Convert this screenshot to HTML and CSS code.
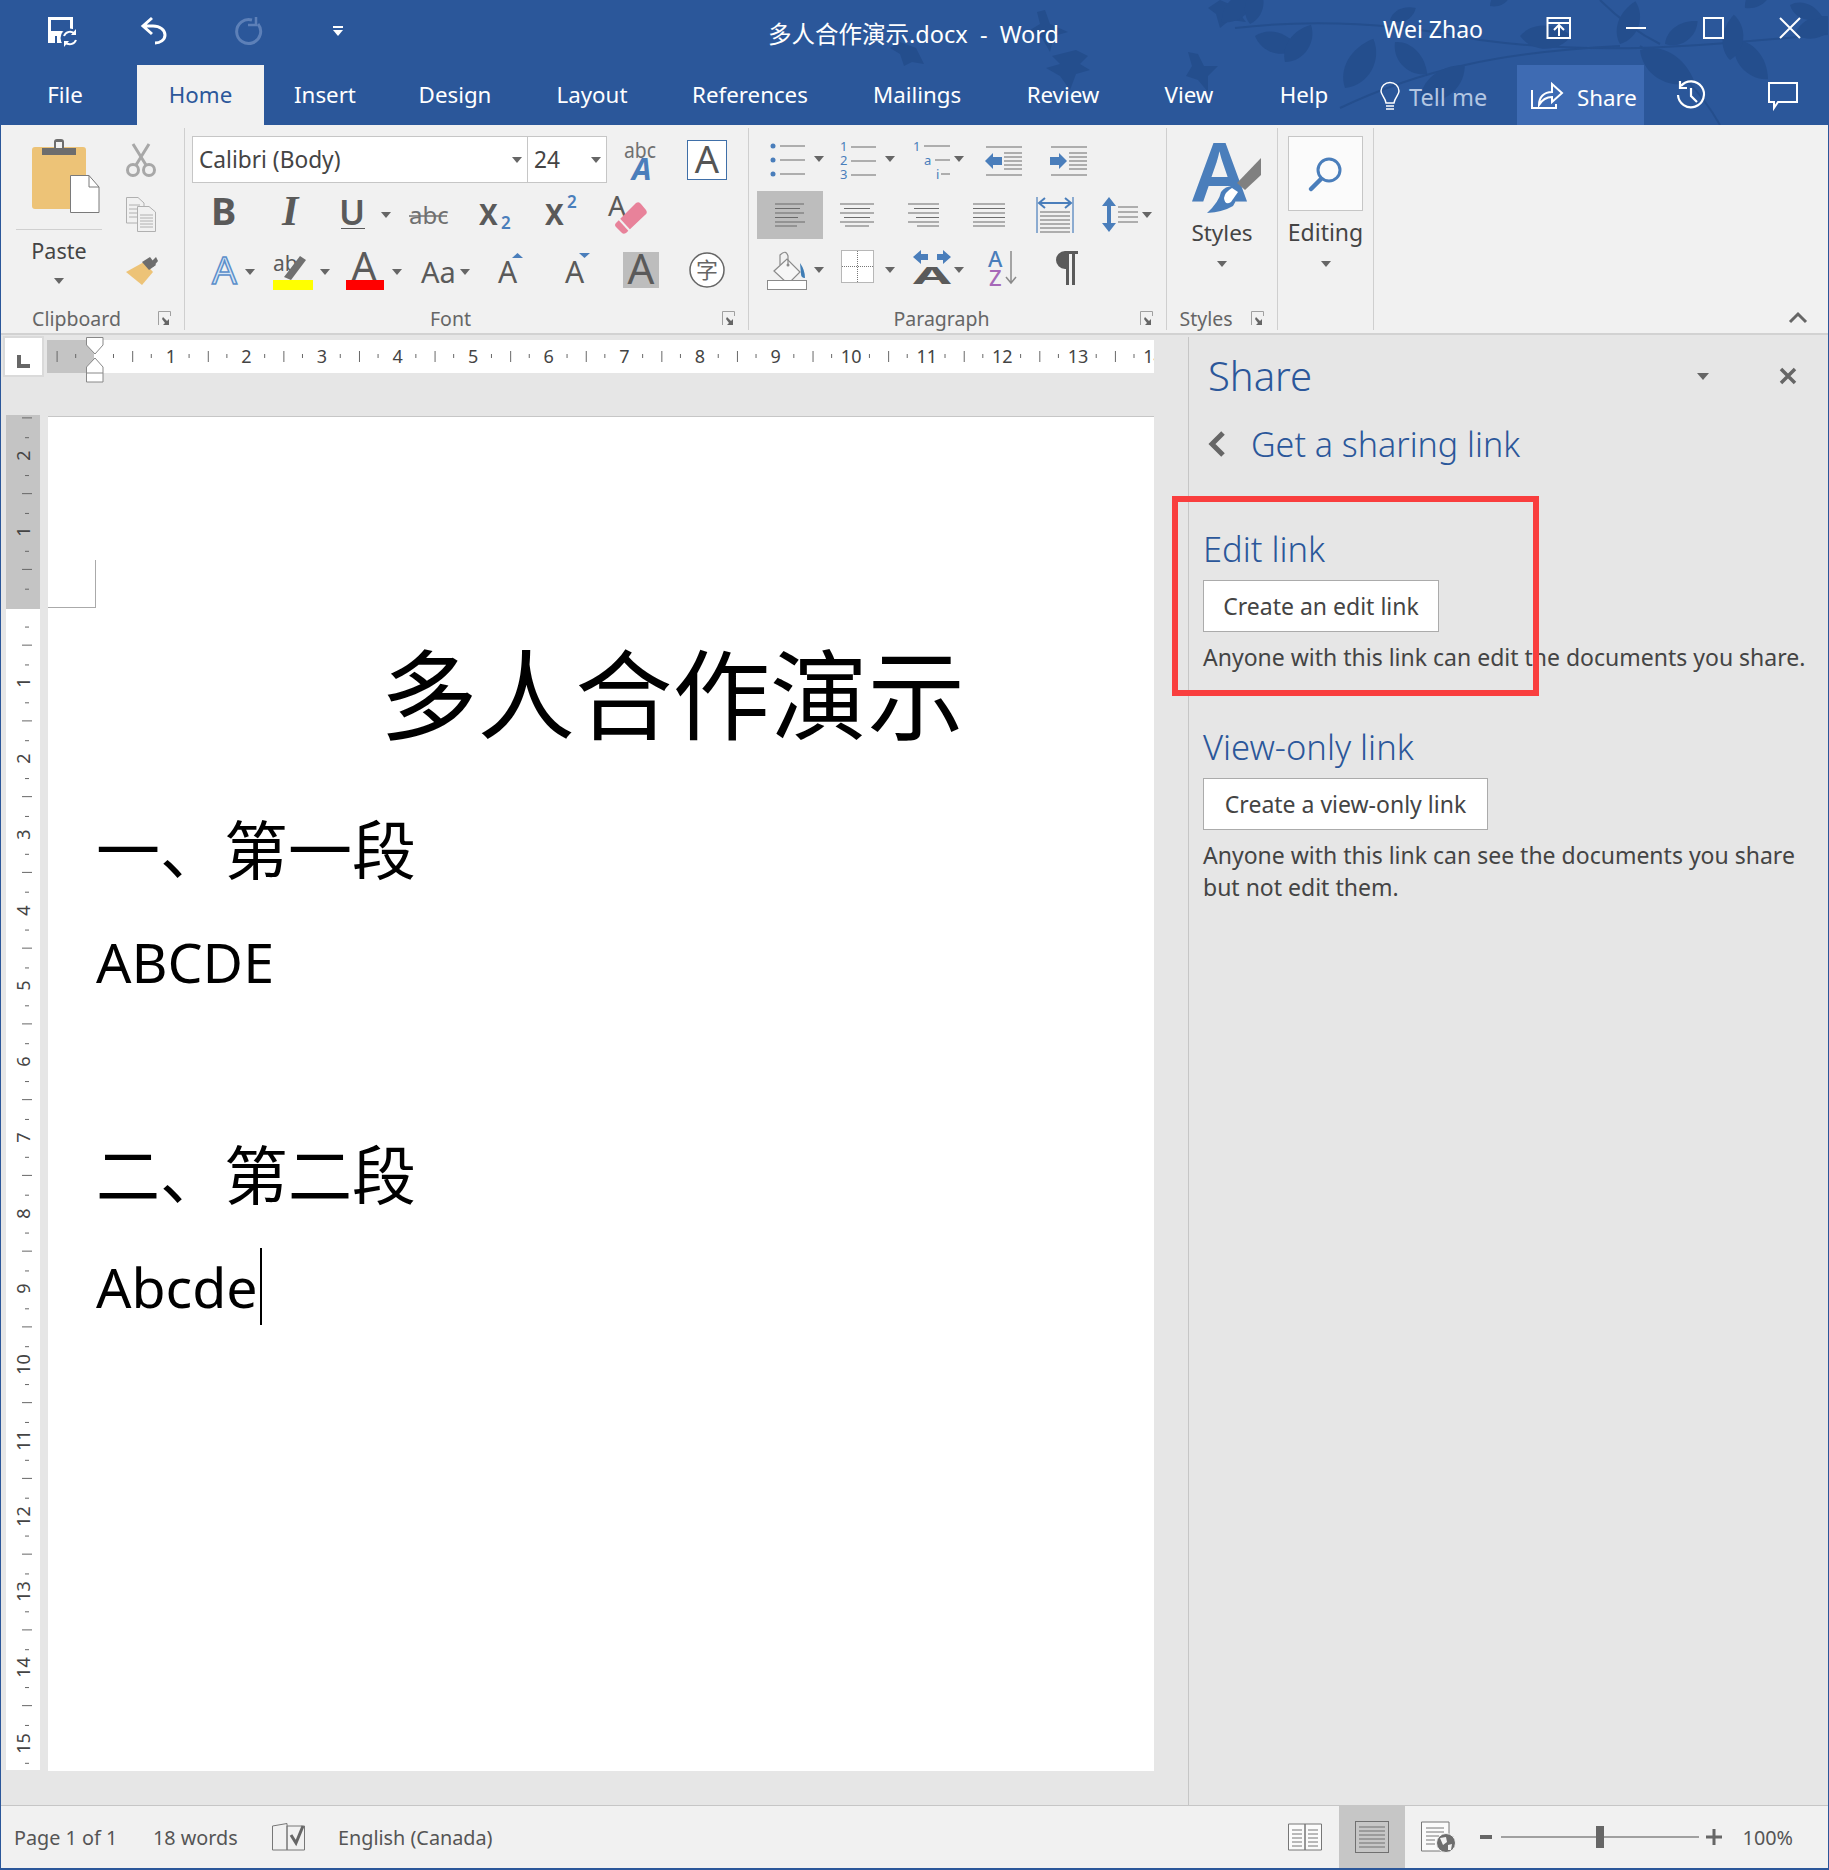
FILE: index.html
```html
<!DOCTYPE html>
<html lang="en">
<head>
    <meta charset="UTF-8">
    <title>多人合作演示.docx - Word</title>
    <link rel="stylesheet" href="styles.css">
</head>
<body>
<div class="window">

    <!-- Title bar and tabs -->
    <header class="header">
        <svg class="deco" width="1829" height="125" viewBox="0 0 1829 125" fill="#244e8d">
            <defs><path id="leaf" d="M0 0C10-17 34-22 56-10 46 10 18 17 0 0Z"/></defs>
            <g fill="none" stroke="#244e8d" stroke-width="2">
                <path d="M1235 28C1320 18 1400 24 1480 40 1600 56 1700 46 1829 34"/>
                <path d="M1340 108C1420 70 1500 52 1620 46"/>
                <path d="M1640 46C1680 70 1700 90 1720 125"/>
                <path d="M1600 0C1620 20 1640 34 1660 44"/>
            </g>
            <path d="M1037 12l8-2 5 14 18 8-14 4-4 16-8-14-12-8 10-6z"/>
            <path d="M1052 56l24-6 12 6-8 8 10 6-14 4-6 16-10-14-14-8 14-4z"/>
            <path d="M900 42l16 6 8 16-12-2-8 4-4-12-10-6z"/>
            <path d="M1188 52l10 2 6 12 14 0-10 10 0 16-10-12-12-4 6-10z"/>
            <path d="M1220 0l14 6 12 16-16-2-10 8-4-14-8-6z"/>
            <use href="#leaf" transform="translate(1222 22) rotate(-35) scale(.8)"/>
            <use href="#leaf" transform="translate(1250 24) rotate(-70) scale(.7)"/>
            <use href="#leaf" transform="translate(1255 36) rotate(25) scale(.8)"/>
            <use href="#leaf" transform="translate(1285 62) rotate(-45) scale(.8)"/>
            <use href="#leaf" transform="translate(1345 88) rotate(-50) scale(1)"/>
            <use href="#leaf" transform="translate(1395 42) rotate(55) scale(.8)"/>
            <use href="#leaf" transform="translate(1420 100) rotate(-28) scale(1)"/>
            <use href="#leaf" transform="translate(1390 20) rotate(-15) scale(.5)"/>
            <use href="#leaf" transform="translate(1490 6) rotate(-30) scale(.5)"/>
            <use href="#leaf" transform="translate(1520 36) rotate(10) scale(.9)"/>
            <use href="#leaf" transform="translate(1620 44) rotate(-60) scale(.8)"/>
            <use href="#leaf" transform="translate(1640 50) rotate(40) scale(1.1)"/>
            <use href="#leaf" transform="translate(1665 44) rotate(-25) scale(.7)"/>
            <use href="#leaf" transform="translate(1735 40) rotate(60) scale(.9)"/>
            <use href="#leaf" transform="translate(1730 60) rotate(-75) scale(.8)"/>
            <use href="#leaf" transform="translate(1745 8) rotate(-35) scale(.7)"/>
            <use href="#leaf" transform="translate(1795 34) rotate(-10) scale(.8)"/>
            <use href="#leaf" transform="translate(1790 5) rotate(30) scale(.6)"/>
        </svg>
        <div class="title-bar">
            <div class="qat">
                <svg width="34" height="32" viewBox="0 0 34 32">
                    <path d="M2 2H27V19H18V28H2Z" fill="#fff"/>
                    <rect x="5" y="5" width="19" height="11" fill="#2B579A"/>
                    <rect x="9" y="21" width="2" height="7" fill="#2B579A"/>
                    <circle cx="24" cy="23" r="9.500" fill="#2B579A"/>
                    <path d="M18 21a6.500 6.500 0 0 1 11-2M30 25a6.500 6.500 0 0 1-11 2" fill="none" stroke="#fff" stroke-width="2"/>
                    <path d="M30 14v6h-5ZM18 32v-6h5Z" fill="#fff"/>
                </svg>
                <svg width="28" height="30" viewBox="0 0 28 30" fill="none" stroke="#fff" stroke-width="3">
                    <path d="M12 2 3 10l9 8M3 10H13C20 10 25 14 25 19 25 24 20 27 15 27"/>
                </svg>
                <svg width="30" height="30" viewBox="0 0 30 30" fill="none" stroke="#5d80b8" stroke-width="3">
                    <path d="M19 4A12 12 0 1 0 25 8"/>
                    <path d="M23 1v8h-8" stroke-width="2.500"/>
                </svg>
                <svg width="10" height="10" viewBox="0 0 10 10" fill="#fff">
                    <rect width="10" height="2"/><path d="M0 4h10l-5 6Z"/>
                </svg>
            </div>
            <div class="doc-name">多人合作演示.docx&nbsp; -&nbsp; Word</div>
            <div class="user">Wei Zhao</div>
            <svg class="win-btn" width="26" height="22" viewBox="0 0 26 22" fill="none" stroke="#fff" stroke-width="2">
                <path d="M1.500 1H24V21H1.500ZM1.500 6H24M13 19V9M8 13l5-5 5 5"/>
            </svg>
            <svg class="win-btn" width="22" height="22" viewBox="0 0 22 22" stroke="#fff" stroke-width="2"><path d="M1 11H21"/></svg>
            <svg class="win-btn" width="22" height="22" viewBox="0 0 22 22" fill="none" stroke="#fff" stroke-width="2"><rect x="2" y="1" width="19" height="20"/></svg>
            <svg class="win-btn" width="22" height="22" viewBox="0 0 22 22" stroke="#fff" stroke-width="2"><path d="M1 1 21 21M21 1 1 21"/></svg>
        </div>
        <nav class="tabs">
            <div class="tab tab-file">File</div>
            <div class="tab tab-active">Home</div>
            <div class="tab">Insert</div>
            <div class="tab">Design</div>
            <div class="tab">Layout</div>
            <div class="tab">References</div>
            <div class="tab">Mailings</div>
            <div class="tab">Review</div>
            <div class="tab">View</div>
            <div class="tab">Help</div>
            <div class="tell">
                <svg width="22" height="30" viewBox="0 0 22 30" fill="none" stroke="#fff" stroke-width="1.500">
                    <path d="M7 21C6 15 2 13 2 9A9 8.500 0 0 1 20 9C20 13 16 15 15 21ZM7 24H15M7 27H15" />
                </svg>
                <span>Tell me</span>
            </div>
            <div class="tab-share">
                <svg width="34" height="28" viewBox="0 0 34 28" fill="none" stroke="#fff" stroke-width="2">
                    <path d="M2 9V27H26V23"/>
                    <path d="M9 24C9 16 14 11 22 11V3L32 12 22 21V16C16 16 12 19 9 24Z"/>
                </svg>
                <span>Share</span>
            </div>
            <svg class="history" width="32" height="30" viewBox="0 0 32 30" fill="none" stroke="#fff" stroke-width="2.200">
                <path d="M6 6A13 13 0 1 1 3 15M5 1V8H12M16 8V16L22 22"/>
            </svg>
            <svg class="comment" width="32" height="28" viewBox="0 0 32 28" fill="none" stroke="#fff" stroke-width="2">
                <path d="M2 2H30V21H11L7 27V21H2Z"/>
            </svg>
        </nav>
    </header>

    <!-- Ribbon -->
    <section class="ribbon">

        <div class="group group-clipboard">
            <div class="group-body clip-body">
                <div class="paste">
                    <svg class="paste-icon" width="72" height="78" viewBox="0 0 72 78">
                        <rect x="2" y="10" width="54" height="62" rx="3" fill="#edc377"/>
                        <path d="M12 18V11H24V5Q24 2 27 2H31Q34 2 34 5V11H46V18Z" fill="#6d6d6d"/>
                        <rect x="26" y="5" width="6" height="6" fill="#f1f1f1"/>
                        <path d="M40.500 38.500H59L69 50V75.500H40.500Z" fill="#fff" stroke="#7a7a7a"/>
                        <path d="M59 38.500V50H69" fill="none" stroke="#7a7a7a"/>
                    </svg>
                    <div class="paste-label">Paste</div>
                    <i class="caret"></i>
                </div>
                <div class="clip-tools">
                    <svg width="30" height="34" viewBox="0 0 30 34" fill="none" stroke="#a8a8a8" stroke-width="3">
                        <circle cx="7" cy="27" r="5.500"/><circle cx="23" cy="27" r="5.500"/>
                        <path d="M10 22 23 1M20 22 7 1"/>
                    </svg>
                    <svg width="30" height="35" viewBox="0 0 30 35" fill="#f1f1f1" stroke="#b0b0b0">
                        <path d="M.5.500H12L18 6V26H.5Z"/>
                        <path d="M3 8H14M3 12H14M3 16H14M3 20H14" fill="none"/>
                        <path d="M11.500 9.500H23L29.500 15V34.500H11.500Z"/>
                        <path d="M14 18H27M14 21H27M14 24H27M14 27H27M14 30H27" fill="none"/>
                    </svg>
                    <svg width="32" height="28" viewBox="0 0 32 28">
                        <path d="M0 15 18 5 27 15 16 28Z" fill="#edc377"/>
                        <path d="M15 6 23 1 29 9 22 14Z" fill="#6d6d6d" transform="translate(1 -1)"/>
                        <path d="M24 6 30 0 32 4 27 10Z" fill="#6d6d6d"/>
                    </svg>
                </div>
            </div>
            <div class="group-label"><span>Clipboard</span><svg class="launcher" width="13" height="15" viewBox="0 0 13 15"><path d="M.5 14V.5H12.500V5" fill="none" stroke="#a0a0a0"/><path d="M5 6 9 10 11 8V14H5L7 12 4 8Z" fill="#666"/></svg></div>
        </div>

        <div class="group group-font">
            <div class="group-body font-body">
                <div class="font-row">
                    <div class="font-box"><span>Calibri (Body)</span><i class="caret"></i></div>
                    <div class="size-box"><span>24</span><i class="caret"></i></div>
                    <svg class="abc-icon" width="34" height="40" viewBox="0 0 34 40">
                        <text x="0" y="18" font-size="21" textLength="32" lengthAdjust="spacingAndGlyphs" fill="#707070">abc</text>
                        <text x="8" y="40" font-size="31" font-weight="700" font-style="italic" fill="#4a7ebb">A</text>
                    </svg>
                    <svg class="box-a" width="40" height="40" viewBox="0 0 40 40">
                        <rect x=".5" y=".5" width="39" height="39" fill="#fff" stroke="#3f6fa8"/>
                        <text x="20" y="33" font-size="38" text-anchor="middle" fill="#555">A</text>
                    </svg>
                </div>
                <div class="tool-row font-row-2">
                    <svg width="40" height="40" viewBox="0 0 40 40"><text x="-2" y="30" font-size="38" font-weight="700" fill="#5a5a5a">B</text></svg>
                    <svg width="40" height="40" viewBox="0 0 40 40"><text x="0" y="30" font-size="42" font-weight="700" font-style="italic" class="serif" fill="#5a5a5a">I</text></svg>
                    <svg width="30" height="40" viewBox="0 0 30 40"><text x="-2" y="30" font-size="35" font-weight="600" fill="#5a5a5a">U</text><path d="M0 33.500H24" stroke="#5a5a5a"/></svg>
                    <i class="caret"></i>
                    <svg width="42" height="40" viewBox="0 0 42 40"><text x="0" y="29" font-size="24" fill="#707070">abc</text><path d="M0 21H38" stroke="#707070" stroke-width="1.500"/></svg>
                    <svg width="34" height="40" viewBox="0 0 34 40"><text x="0" y="30" font-size="28" font-weight="700" fill="#5a5a5a">X</text><text x="22" y="34" font-size="17" font-weight="600" fill="#4a7ebb">2</text></svg>
                    <svg width="34" height="40" viewBox="0 0 34 40"><text x="0" y="30" font-size="28" font-weight="700" fill="#5a5a5a">X</text><text x="22" y="13" font-size="17" font-weight="600" fill="#4a7ebb">2</text></svg>
                    <svg width="40" height="40" viewBox="0 0 40 40">
                        <text x="0" y="21" font-size="28" fill="#5a5a5a">A</text>
                        <path d="M8 28 28 8Q31 6 33 9L38 15Q40 18 37 20L18 38Q15 40 13 37L8 32Q6 30 8 28Z" fill="#e8829a"/>
                        <path d="M11 24 22 36" stroke="#f1f1f1" stroke-width="2"/>
                    </svg>
                </div>
                <div class="tool-row font-row-3">
                    <svg width="28" height="36" viewBox="0 0 28 36"><text x="-1" y="32" font-size="39" fill="#d8e6f5" stroke="#5b8fca" stroke-width="1.500">A</text></svg>
                    <i class="caret"></i>
                    <svg width="42" height="40" viewBox="0 0 42 40">
                        <text x="0" y="19" font-size="21" fill="#5a5a5a">ab</text>
                        <path d="M11 25 27 4 33 8 18 28ZM9 28 16 30 12 33Z" fill="#707070"/>
                        <rect y="28" width="40" height="10" fill="#ffff00"/>
                    </svg>
                    <i class="caret"></i>
                    <svg width="40" height="40" viewBox="0 0 40 40">
                        <text x="16" y="29" font-size="40" text-anchor="middle" fill="#5a5a5a">A</text>
                        <rect x="-2" y="28" width="38" height="10" fill="#f00"/>
                    </svg>
                    <i class="caret"></i>
                    <svg width="38" height="40" viewBox="0 0 38 40"><text x="0" y="31" font-size="29" fill="#5a5a5a">Aa</text></svg>
                    <i class="caret"></i>
                    <svg width="30" height="40" viewBox="0 0 30 40"><text x="0" y="31" font-size="30" fill="#5a5a5a">A</text><path d="M14 6 19.500 1 25 6Z" fill="#4a7ebb"/></svg>
                    <svg width="30" height="40" viewBox="0 0 30 40"><text x="0" y="31" font-size="30" fill="#5a5a5a">A</text><path d="M14 1H25L19.500 6Z" fill="#4a7ebb"/></svg>
                    <svg width="36" height="36" viewBox="0 0 36 36"><rect width="36" height="36" fill="#bdbdbd"/><text x="18" y="32" font-size="42" text-anchor="middle" fill="#5a5a5a">A</text></svg>
                    <svg width="36" height="36" viewBox="0 0 36 36"><circle cx="18" cy="18" r="17" fill="#fff" stroke="#666" stroke-width="1.500"/><text x="18" y="26" font-size="22" text-anchor="middle" class="cjk" fill="#666">字</text></svg>
                </div>
            </div>
            <div class="group-label"><span>Font</span><svg class="launcher" width="13" height="15" viewBox="0 0 13 15"><path d="M.5 14V.5H12.500V5" fill="none" stroke="#a0a0a0"/><path d="M5 6 9 10 11 8V14H5L7 12 4 8Z" fill="#666"/></svg></div>
        </div>

        <div class="group group-para">
            <div class="group-body para-body">
                <div class="tool-row para-row-1">
                    <svg class="list-icon" width="36" height="40" viewBox="0 0 36 40">
                        <g fill="#4a7ebb"><circle cx="3" cy="5" r="2.500"/><circle cx="3" cy="19" r="2.500"/><circle cx="3" cy="33" r="2.500"/></g>
                        <path d="M10 5H35M10 19H35M10 33H35" stroke="#6d6d6d" stroke-width="1.200"/>
                    </svg>
                    <i class="caret"></i>
                    <svg class="list-icon" width="38" height="40" viewBox="0 0 38 40">
                        <g font-size="13" fill="#4a7ebb"><text x="0" y="10">1</text><text x="0" y="24">2</text><text x="0" y="38">3</text></g>
                        <path d="M11 6H36M11 20H36M11 34H36" stroke="#6d6d6d" stroke-width="1.200"/>
                    </svg>
                    <i class="caret"></i>
                    <svg class="list-icon" width="38" height="40" viewBox="0 0 38 40">
                        <g font-size="13" fill="#4a7ebb"><text x="0" y="10">1</text><text x="11" y="24">a</text><text x="23" y="38">i</text></g>
                        <path d="M11 5H37M22 19H37M28 33H37" stroke="#6d6d6d" stroke-width="1.200"/>
                    </svg>
                    <i class="caret"></i>
                    <svg class="indent-icon" width="38" height="30" viewBox="0 0 38 30">
                        <path d="M1 1H37M19 7H37M19 11H37M19 15H37M19 19H37M19 23H37M1 29H37" stroke="#6d6d6d" stroke-width="1.200"/>
                        <path d="M0 15 8 7V11H17V19H8V23Z" fill="#4a7ebb"/>
                    </svg>
                    <svg class="indent-icon" width="38" height="30" viewBox="0 0 38 30">
                        <path d="M1 1H37M19 7H37M19 11H37M19 15H37M19 19H37M19 23H37M1 29H37" stroke="#6d6d6d" stroke-width="1.200"/>
                        <path d="M17 15 9 7V11H0V19H9V23Z" fill="#4a7ebb"/>
                    </svg>
                </div>
                <div class="tool-row para-row-2">
                    <div class="align-on">
                        <svg width="32" height="24" viewBox="0 0 32 24"><path d="M1 1H30M1 5.500H26M1 10H30M1 14.500H24M1 19H31M1 23H23" stroke="#6a6a6a" stroke-width="1.200"/></svg>
                    </div>
                    <svg width="36" height="48" viewBox="0 0 36 48"><path d="M1 13H35M5 17.500H31M1 22H35M5 26.500H31M1 31H35M6 35H30" stroke="#6d6d6d" stroke-width="1.200"/></svg>
                    <svg width="34" height="48" viewBox="0 0 34 48"><path d="M2 13H33M8 17.500H33M2 22H33M10 26.500H33M2 31H33M11 35H33" stroke="#6d6d6d" stroke-width="1.200"/></svg>
                    <svg width="34" height="48" viewBox="0 0 34 48"><path d="M1 13H33M1 17.500H33M1 22H33M1 26.500H33M1 31H33M1 35H33" stroke="#6d6d6d" stroke-width="1.200"/></svg>
                    <svg width="38" height="48" viewBox="0 0 38 48">
                        <path d="M1 6V42M37 6V42" stroke="#4a7ebb" stroke-width="1.200"/>
                        <path d="M4 21H34M4 25H34M4 29H34M4 33H34M4 37H34M4 41H34" stroke="#6d6d6d" stroke-width="1.200"/>
                        <path d="M4 12H34M9 7 3 12 9 17M29 7 35 12 29 17" fill="none" stroke="#4a7ebb" stroke-width="2"/>
                    </svg>
                    <svg width="38" height="48" viewBox="0 0 38 48">
                        <path d="M7 10V37" stroke="#4a7ebb" stroke-width="4"/>
                        <path d="M0 15 7 6 14 15ZM0 32 7 41 14 32Z" fill="#4a7ebb"/>
                        <path d="M16 16H36M16 21H36M16 26H36M16 31H36" stroke="#6d6d6d" stroke-width="1.200"/>
                    </svg>
                    <i class="caret"></i>
                </div>
                <div class="tool-row para-row-3">
                    <svg width="42" height="40" viewBox="0 0 42 40">
                        <path d="M7 21 20 9 33 22 21 34Z" fill="#f6f6f6" stroke="#8a8a8a" stroke-width="1.200"/>
                        <path d="M13 15V5Q19-1 21 6V14" fill="none" stroke="#8a8a8a" stroke-width="1.200"/>
                        <circle cx="21" cy="15" r="1.500" fill="#8a8a8a"/>
                        <path d="M33 13Q38 20 38 28 34 28 34 24Z" fill="#3f7db5"/>
                        <rect x=".5" y="30.500" width="39" height="9" fill="#fff" stroke="#8a8a8a"/>
                    </svg>
                    <i class="caret"></i>
                    <svg width="34" height="34" viewBox="0 0 34 34">
                        <rect x=".5" y=".5" width="32" height="32" fill="#fff" stroke="#777" stroke-dasharray="1 1"/>
                        <path d="M16.500 1V33M1 16.500H33" stroke="#777" stroke-dasharray="1 1"/>
                    </svg>
                    <i class="caret"></i>
                    <svg width="38" height="36" viewBox="0 0 38 36">
                        <path d="M0 7 8 0V4H15V10H8V14ZM38 7 30 0V4H24V10H30V14Z" fill="#4a7ebb"/>
                        <text x="0" y="34" font-size="24" font-weight="700" textLength="38" lengthAdjust="spacingAndGlyphs" fill="#5a5a5a">A</text>
                    </svg>
                    <i class="caret"></i>
                    <svg width="30" height="36" viewBox="0 0 30 36">
                        <text x="0" y="17" font-size="22" fill="#4a7ebb" font-weight="500">A</text>
                        <text x="1" y="36" font-size="22" fill="#a668b8" font-weight="500">Z</text>
                        <path d="M23 1V32M18 27 23 33 28 27" fill="none" stroke="#8a8a8a" stroke-width="1.500"/>
                    </svg>
                    <svg class="pilcrow" width="26" height="36" viewBox="0 0 26 36">
                        <path d="M25 1H12A9 9 0 0 0 12 19H13V35H16V4H19V35H22V4H25Z" fill="#5a5a5a"/>
                    </svg>
                </div>
            </div>
            <div class="group-label"><span>Paragraph</span><svg class="launcher" width="13" height="15" viewBox="0 0 13 15"><path d="M.5 14V.5H12.500V5" fill="none" stroke="#a0a0a0"/><path d="M5 6 9 10 11 8V14H5L7 12 4 8Z" fill="#666"/></svg></div>
        </div>

        <div class="group group-styles">
            <div class="group-body big-body styles-body">
                <svg class="styles-icon" width="70" height="72" viewBox="0 0 70 72">
                    <text x="-1" y="59" font-size="82" font-weight="600" fill="#4a7ebb">A</text>
                    <path d="M68 16V33L52 48 44 41Z" fill="#808080"/>
                    <path d="M40 44 48 50 40 64 Q30 70 14 71 26 60 28 50Q32 44 40 44Z" fill="#4a7ebb"/>
                    <path d="M39 46 45 50 38 60Q32 64 31 56Q32 50 39 46Z" fill="#fff"/>
                </svg>
                <div class="big-label">Styles</div>
                <i class="caret caret-big"></i>
            </div>
            <div class="group-label"><span>Styles</span><svg class="launcher" width="13" height="15" viewBox="0 0 13 15"><path d="M.5 14V.5H12.500V5" fill="none" stroke="#a0a0a0"/><path d="M5 6 9 10 11 8V14H5L7 12 4 8Z" fill="#666"/></svg></div>
        </div>

        <div class="group group-editing">
            <div class="group-body big-body editing-body">
                <div class="edit-btn">
                    <svg width="36" height="36" viewBox="0 0 36 36" fill="none" stroke="#4a7ebb">
                        <circle cx="21" cy="14" r="11" stroke-width="3"/>
                        <path d="M13 23 3 33" stroke-width="4.500" stroke-linecap="round"/>
                    </svg>
                </div>
                <div class="big-label">Editing</div>
                <i class="caret caret-big"></i>
            </div>
        </div>

        <svg class="collapse" width="20" height="12" viewBox="0 0 20 12" fill="none" stroke="#666" stroke-width="3"><path d="M2 11 10 3 18 11"/></svg>
    </section>

    <!-- Document and pane -->
    <main class="main">
        <div class="doc-area">
            <div class="ruler-row">
                <div class="ruler-corner"><i class="tab-stop"></i></div>
                <div class="hruler">
                    <span>1</span><span>2</span><span>3</span><span>4</span><span>5</span><span>6</span><span>7</span>
                    <span>8</span><span>9</span><span>10</span><span>11</span><span>12</span><span>13</span><span>14</span>
                </div>
                <svg class="indent" width="18" height="46" viewBox="0 0 18 46" fill="#fff" stroke="#888">
                    <path d="M.5.500H17V8L9 17 .5 8Z"/>
                    <path d="M9 21 17 30V45H.5V30Z"/>
                    <path d="M.5 36H17" fill="none"/>
                </svg>
            </div>
            <div class="doc-row">
                <div class="vruler">
                    <span>2</span><span>1</span><span></span><span>1</span><span>2</span><span>3</span><span>4</span><span>5</span><span>6</span>
                    <span>7</span><span>8</span><span>9</span><span>10</span><span>11</span><span>12</span><span>13</span><span>14</span><span>15</span>
                </div>
                <div class="page">
                    <div class="crop-mark"></div>
                    <h1 class="doc-title">多人合作演示</h1>
                    <p class="doc-cjk first">一、第一段</p>
                    <p class="doc-latin">ABCDE</p>
                    <p class="doc-cjk second">二、第二段</p>
                    <p class="doc-latin">Abcde<i class="cursor"></i></p>
                </div>
            </div>
        </div>

        <aside class="pane">
            <div class="pane-head">
                <div class="pane-title">Share</div>
                <i class="caret pane-caret"></i>
                <svg width="16" height="16" viewBox="0 0 16 16" stroke="#666" stroke-width="3.500"><path d="M1 1 15 15M15 1 1 15"/></svg>
            </div>
            <div class="pane-back">
                <svg width="18" height="26" viewBox="0 0 18 26" fill="none" stroke="#666" stroke-width="5"><path d="M15 2 4 13 15 24"/></svg>
                <span>Get a sharing link</span>
            </div>
            <h3 class="link-title link-edit">Edit link</h3>
            <button class="link-btn btn-edit">Create an edit link</button>
            <p class="link-desc">Anyone with this link can edit the documents you share.</p>
            <h3 class="link-title link-view">View-only link</h3>
            <button class="link-btn btn-view">Create a view-only link</button>
            <p class="link-desc">Anyone with this link can see the documents you share<br>but not edit them.</p>
        </aside>

        <div class="red-box"></div>
    </main>

    <!-- Status bar -->
    <footer class="status">
        <div class="status-left">
            <span>Page 1 of 1</span>
            <span>18 words</span>
            <svg width="34" height="28" viewBox="0 0 34 28" fill="none" stroke="#777">
                <path d="M.5 3 15 .5V27L.5 27ZM15 3H32.500V27H15Z"/>
                <path d="M19 12 24 20 31 3" stroke="#666" stroke-width="3"/>
            </svg>
            <span>English (Canada)</span>
        </div>
        <div class="status-right">
            <svg class="view-read" width="34" height="30" viewBox="0 0 34 30" fill="none" stroke="#777">
                <path d="M.5 2H17V28H.5ZM17 2H33.500V28H17Z" fill="#fbfbfb"/>
                <path d="M4 8H14M4 12H14M4 16H14M4 20H14M4 24H14M20 8H30M20 12H30M20 16H30M20 20H30M20 24H30"/>
            </svg>
            <div class="view-print">
                <svg width="34" height="32" viewBox="0 0 34 32" fill="none" stroke="#707070">
                    <rect x=".5" y=".5" width="33" height="31"/>
                    <path d="M4 6H30M4 10H30M4 14H30M4 18H30M4 22H30M4 26H30"/>
                </svg>
            </div>
            <svg class="view-web" width="36" height="32" viewBox="0 0 36 32" fill="none" stroke="#777">
                <path d="M.5 1H28V30H.5Z" fill="#fbfbfb"/>
                <path d="M5 7H23M5 11H23M5 15H18M5 19H14M5 23H14"/>
                <circle cx="25" cy="22" r="9.500" fill="#6d6d6d" stroke="#f1f1f1"/>
                <path d="M19 17 25 16 26 21 22 24ZM27 24 31 23 30 29 27 29Z" fill="#f1f1f1" stroke="none"/>
            </svg>
            <i class="zoom-minus"></i>
            <div class="zoom-slider"><i class="zoom-thumb"></i></div>
            <svg class="zoom-plus" width="16" height="16" viewBox="0 0 16 16" stroke="#666" stroke-width="3"><path d="M0 8H16M8 0V16"/></svg>
            <span class="zoom-pct">100%</span>
        </div>
    </footer>
</div>
</body>
</html>
```

FILE: styles.css
```css
* {
    box-sizing: border-box;
}
body {
    margin: 0;
    font-family: "Noto Sans", "Noto Sans CJK SC", sans-serif;
    color: #444;
}
i {
    display: block;
}
svg {
    display: block;
    overflow: visible;
}
svg text {
    font-family: "Noto Sans", sans-serif;
}
svg text.serif {
    font-family: "Liberation Serif", serif;
}
svg text.cjk {
    font-family: "Noto Sans CJK SC", sans-serif;
}
.window {
    position: relative;
    width: 1829px;
    height: 1870px;
    display: flex;
    flex-direction: column;
    border-left: 1px solid #2b579a;
    border-right: 1px solid #2b579a;
    border-bottom: 2px solid #2b579a;
    background: #e6e6e6;
    overflow: hidden;
}

/* header */
.header {
    position: relative;
    height: 125px;
    margin: 0 -1px;
    padding-left: 1px;
    background: #2b579a;
    color: #fff;
    flex: none;
}
.deco {
    position: absolute;
    left: 0;
    top: 0;
}
.title-bar {
    position: relative;
    height: 65px;
    display: grid;
    grid-template-columns: 767px 615px 163px 79px 77px 77px 50px;
    align-items: center;
}
.qat {
    display: grid;
    grid-template-columns: 94px 93px 100px auto;
    padding: 0 0 3px 45px;
    align-items: center;
}
.doc-name {
    font-size: 23.5px;
    white-space: nowrap;
}
.user {
    padding-bottom: 7px;
    font-size: 23px;
    white-space: nowrap;
}
.win-btn {
    margin-bottom: 9px;
}
.tabs {
    position: relative;
    height: 60px;
    display: flex;
    align-items: center;
}
.tab {
    height: 60px;
    line-height: 60px;
    font-size: 22.3px;
    text-align: center;
    flex: none;
}
.tab:nth-child(1) { width: 136px; padding-right: 8px; }
.tab:nth-child(2) { width: 127px; }
.tab:nth-child(3) { width: 122px; }
.tab:nth-child(4) { width: 138px; }
.tab:nth-child(5) { width: 136px; }
.tab:nth-child(6) { width: 180px; }
.tab:nth-child(7) { width: 154px; }
.tab:nth-child(8) { width: 138px; }
.tab:nth-child(9) { width: 114px; }
.tab:nth-child(10) { width: 116px; }
.tab-active {
    background: #f1f1f1;
    color: #2b579a;
}
.tell {
    width: 155px;
    padding-left: 17px;
    display: flex;
    align-items: center;
    gap: 8px;
    font-size: 23.5px;
    color: #b3c6e2;
}
.tell svg {
    margin-top: 4px;
}
.tell span {
    padding-top: 4px;
}
.tab-share {
    width: 127px;
    height: 60px;
    padding-left: 13px;
    display: flex;
    align-items: center;
    gap: 13px;
    background: #3e6bb3;
    font-size: 22.3px;
}
.tab-share span {
    padding-top: 4px;
}
.history {
    margin-left: 31px;
}
.comment {
    margin-left: 60px;
}

/* ribbon */
.ribbon {
    position: relative;
    height: 210px;
    margin-right: -1px;
    padding: 3px 0 0 0;
    display: flex;
    background: #f1f1f1;
    border-bottom: 2px solid #d2d2d2;
    flex: none;
}
.group {
    height: 202px;
    border-right: 1px solid #cfcfcf;
    display: flex;
    flex-direction: column;
    flex: none;
}
.group-clipboard { width: 184px; }
.group-font { width: 564px; }
.group-para { width: 418px; }
.group-styles { width: 111px; }
.group-editing { width: 96px; }
.group-body {
    flex: 1;
}
.group-label {
    height: 24px;
    padding-right: 13px;
    display: flex;
    align-items: center;
    font-size: 19.5px;
    color: #666;
}
.group-label span {
    flex: 1;
    text-align: center;
}
.launcher {
    margin-left: 6px;
}
.caret {
    width: 0;
    height: 0;
    border-left: 5px solid transparent;
    border-right: 5px solid transparent;
    border-top: 6px solid #666;
}

/* clipboard */
.clip-body {
    display: flex;
    padding-left: 15px;
}
.paste {
    width: 86px;
    display: flex;
    flex-direction: column;
    align-items: center;
}
.paste-icon {
    margin: 9px 0 14px 14px;
    align-self: flex-start;
}
.paste-label {
    width: 86px;
    border-top: 1px solid #d0d0d0;
    padding-top: 8px;
    line-height: 26px;
    text-align: center;
    font-size: 21.5px;
}
.paste .caret {
    margin-top: 14px;
}
.clip-tools {
    margin-left: 24px;
    padding-top: 15px;
    display: grid;
    grid-template-rows: 54px 60px 34px;
}

/* font */
.font-body {
    padding: 8px 0 0 7px;
}
.font-row {
    display: flex;
    align-items: flex-start;
}
.font-box, .size-box {
    height: 47px;
    background: #fff;
    border: 1px solid #c6c6c6;
    display: flex;
    align-items: center;
    font-size: 22.7px;
}
.font-box {
    width: 336px;
    padding: 0 5px 0 6px;
}
.size-box {
    width: 80px;
    margin-left: -1px;
    padding: 0 5px 0 6px;
}
.font-box span, .size-box span {
    flex: 1;
}
.abc-icon {
    margin: 4px 0 0 17px;
}
.box-a {
    margin: 4px 0 0 29px;
}
.tool-row {
    display: grid;
    align-items: start;
}
.tool-row .caret {
    margin-top: 17px;
}
.font-row-2 {
    margin: 12px 0 0 21px;
    grid-template-columns: 69px 59px 40px 28px 70px 66px 63px 40px;
}
.font-row-3 {
    margin: 17px 0 0 21px;
    grid-template-columns: 32px 28px 47px 28px 44px 29px 39px 38px 67px 58px 66px 36px;
}

/* paragraph */
.para-body {
    padding-top: 12px;
}
.para-row-1 {
    height: 51px;
    margin-left: 21px;
    grid-template-columns: 44px 26px 45px 28px 41px 31px 65px 38px;
}
.para-row-1 .caret {
    margin-top: 16px;
}
.list-icon {
    margin-top: 1px;
}
.indent-icon {
    margin-top: 6px;
}
.para-row-2 {
    height: 59px;
    margin-left: 8px;
    grid-template-columns: 82px 67px 66px 64px 66px 40px 10px;
}
.para-row-2 .caret {
    margin-top: 21px;
}
.align-on {
    width: 66px;
    height: 48px;
    background: #bdbdbd;
    display: flex;
    align-items: center;
    justify-content: center;
}
.para-row-3 {
    margin-left: 18px;
    grid-template-columns: 47px 27px 44px 28px 41px 34px 69px 30px;
}
.pilcrow {
    margin-left: -4px;
}

/* big buttons */
.big-body {
    display: flex;
    flex-direction: column;
    align-items: center;
    padding-top: 14px;
}
.styles-icon {
    margin-left: 12px;
}
.big-label {
    margin-top: 5px;
    height: 30px;
    line-height: 30px;
    font-size: 22.5px;
}
.caret-big {
    margin-top: 12px;
}
.styles-body .big-label {
    margin-top: 4px;
}
.styles-body .caret-big {
    margin-top: 13px;
}
.editing-body {
    padding-top: 8px;
}
.edit-btn {
    width: 75px;
    height: 75px;
    background: #fbfbfb;
    border: 1px solid #c6c6c6;
    display: flex;
    align-items: center;
    justify-content: center;
}
.editing-body .big-label {
    margin-top: 6px;
    font-size: 23px;
}
.editing-body .caret-big {
    margin-top: 14px;
}
.collapse {
    position: absolute;
    left: 1787px;
    top: 186px;
}

/* document area */
.main {
    flex: 1;
    display: flex;
    min-height: 0;
}
.doc-area {
    width: 1187px;
    flex: none;
}
.ruler-row {
    position: relative;
    display: flex;
    padding: 3px 0 0 4px;
    gap: 5px;
    align-items: flex-start;
}
.ruler-corner {
    width: 37px;
    height: 37px;
    background: #fff;
    box-shadow: 0 0 0 2px #dadada;
    flex: none;
    position: relative;
}
.tab-stop {
    position: absolute;
    left: 12px;
    top: 17px;
    width: 13px;
    height: 13px;
    border-left: 4px solid #666;
    border-bottom: 4px solid #666;
}
.hruler {
    width: 1107px;
    height: 33px;
    margin-top: 2px;
    padding-left: 86px;
    display: flex;
    overflow: hidden;
    background-color: #fff;
    background-image:
        linear-gradient(90deg, #666 1px, transparent 1px),
        linear-gradient(90deg, #666 1px, transparent 1px),
        linear-gradient(#c4c4c4, #c4c4c4);
    background-size: 37.8px 4px, 75.6px 11px, 47px 33px;
    background-position: 28.2px 14px, 9.6px 11px, 0 0;
    background-repeat: repeat-x, repeat-x, no-repeat;
}
.hruler span {
    width: 75.6px;
    flex: none;
    line-height: 32px;
    text-align: center;
    font-size: 18px;
    color: #444;
}
.indent {
    position: absolute;
    left: 85px;
    top: 2px;
}
.doc-row {
    margin-top: 40px;
    padding-left: 5px;
    display: flex;
    gap: 8px;
    align-items: flex-start;
}
.vruler {
    width: 34px;
    height: 1355px;
    padding-top: 3px;
    overflow: hidden;
    background-color: #fff;
    background-image:
        linear-gradient(#666 1px, transparent 1px),
        linear-gradient(#666 1px, transparent 1px),
        linear-gradient(#c4c4c4, #c4c4c4);
    background-size: 4px 37.875px, 10px 75.75px, 34px 194px;
    background-position: 19px 22.2px, 16px 2.4px, 0 0;
    background-repeat: repeat-y, repeat-y, no-repeat;
    flex: none;
}
.vruler span {
    display: block;
    height: 75.75px;
    line-height: 34px;
    width: 34px;
    writing-mode: vertical-rl;
    text-align: center;
    transform: rotate(180deg);
    font-size: 18px;
    color: #444;
}
.page {
    width: 1106px;
    height: 1355px;
    margin-top: 1px;
    background: #fff;
    border-top: 1px solid #c6c6c6;
    color: #000;
    flex: none;
}
.crop-mark {
    width: 48px;
    height: 48px;
    margin-top: 143px;
    border-right: 1px solid #aaa;
    border-bottom: 1px solid #aaa;
}
.doc-title {
    margin: 22px 0 0 332px;
    font-family: "Noto Sans CJK SC", sans-serif;
    font-size: 97.5px;
    font-weight: 400;
    line-height: 120px;
    white-space: nowrap;
}
.doc-cjk {
    margin: 0 0 0 48px;
    font-family: "Noto Sans CJK SC", sans-serif;
    font-size: 64px;
    line-height: 80px;
}
.doc-cjk.first {
    margin-top: 56px;
}
.doc-cjk.second {
    margin-top: 128.5px;
}
.doc-latin {
    margin: 36px 0 0 48px;
    font-size: 55.5px;
    line-height: 80px;
    display: flex;
    align-items: center;
    gap: 2px;
}
.cursor {
    width: 2px;
    height: 77px;
    background: #000;
}

/* share pane */
.pane {
    flex: 1;
    padding: 18px 0 0 14px;
    border-left: 1px solid #c6c6c6;
    margin-top: 2px;
}
.pane-head {
    display: grid;
    grid-template-columns: 494px 83px auto;
    align-items: center;
    height: 42px;
}
.pane-title {
    padding-left: 5px;
    font-size: 40px;
    font-weight: 300;
    line-height: 42px;
    color: #2b579a;
}
.pane-caret {
    border-left-width: 6px;
    border-right-width: 6px;
    border-top-width: 7px;
}
.pane-back {
    margin: 25px 0 0 5px;
    height: 44px;
    display: flex;
    align-items: center;
    gap: 25px;
    font-size: 34px;
    font-weight: 300;
    color: #2b579a;
}
.link-title {
    margin: 0;
    height: 46px;
    line-height: 46px;
    font-size: 34.5px;
    font-weight: 300;
    color: #2b579a;
}
.link-edit {
    margin-top: 60px;
}
.link-view {
    margin-top: 51px;
}
.link-btn {
    display: block;
    height: 52px;
    margin-top: 8px;
    padding: 0;
    background: #fff;
    border: 1px solid #ababab;
    font-family: inherit;
    font-size: 23px;
    color: #444;
}
.btn-edit {
    width: 236px;
}
.btn-view {
    width: 285px;
}
.link-desc {
    margin: 9px 0 0;
    font-size: 23px;
    line-height: 32px;
    color: #444;
    white-space: nowrap;
}
.red-box {
    position: absolute;
    left: 1171px;
    top: 496px;
    width: 367px;
    height: 200px;
    border: 6px solid #f93e3e;
}

/* status bar */
.status {
    height: 63px;
    margin-right: -1px;
    display: flex;
    justify-content: space-between;
    background: #f1f1f1;
    border-top: 1px solid #c6c6c6;
    font-size: 19.8px;
    color: #555;
    flex: none;
}
.status-left {
    display: grid;
    grid-template-columns: 139px 119px 66px auto;
    padding-left: 13px;
    align-items: center;
}
.status-right {
    display: flex;
    align-items: center;
    padding-right: 36px;
}
.view-print {
    width: 66px;
    height: 100%;
    margin-left: 17px;
    background: #c6c6c6;
    display: flex;
    align-items: center;
    justify-content: center;
}
.view-web {
    margin-left: 16px;
}
.zoom-minus {
    width: 12px;
    height: 4px;
    margin-left: 23px;
    background: #666;
}
.zoom-slider {
    position: relative;
    width: 198px;
    height: 2px;
    margin-left: 9px;
    background: #a0a0a0;
}
.zoom-thumb {
    position: absolute;
    left: 95px;
    top: -10px;
    width: 8px;
    height: 22px;
    background: #666;
}
.zoom-plus {
    margin-left: 7px;
}
.zoom-pct {
    margin-left: 21px;
}
```
